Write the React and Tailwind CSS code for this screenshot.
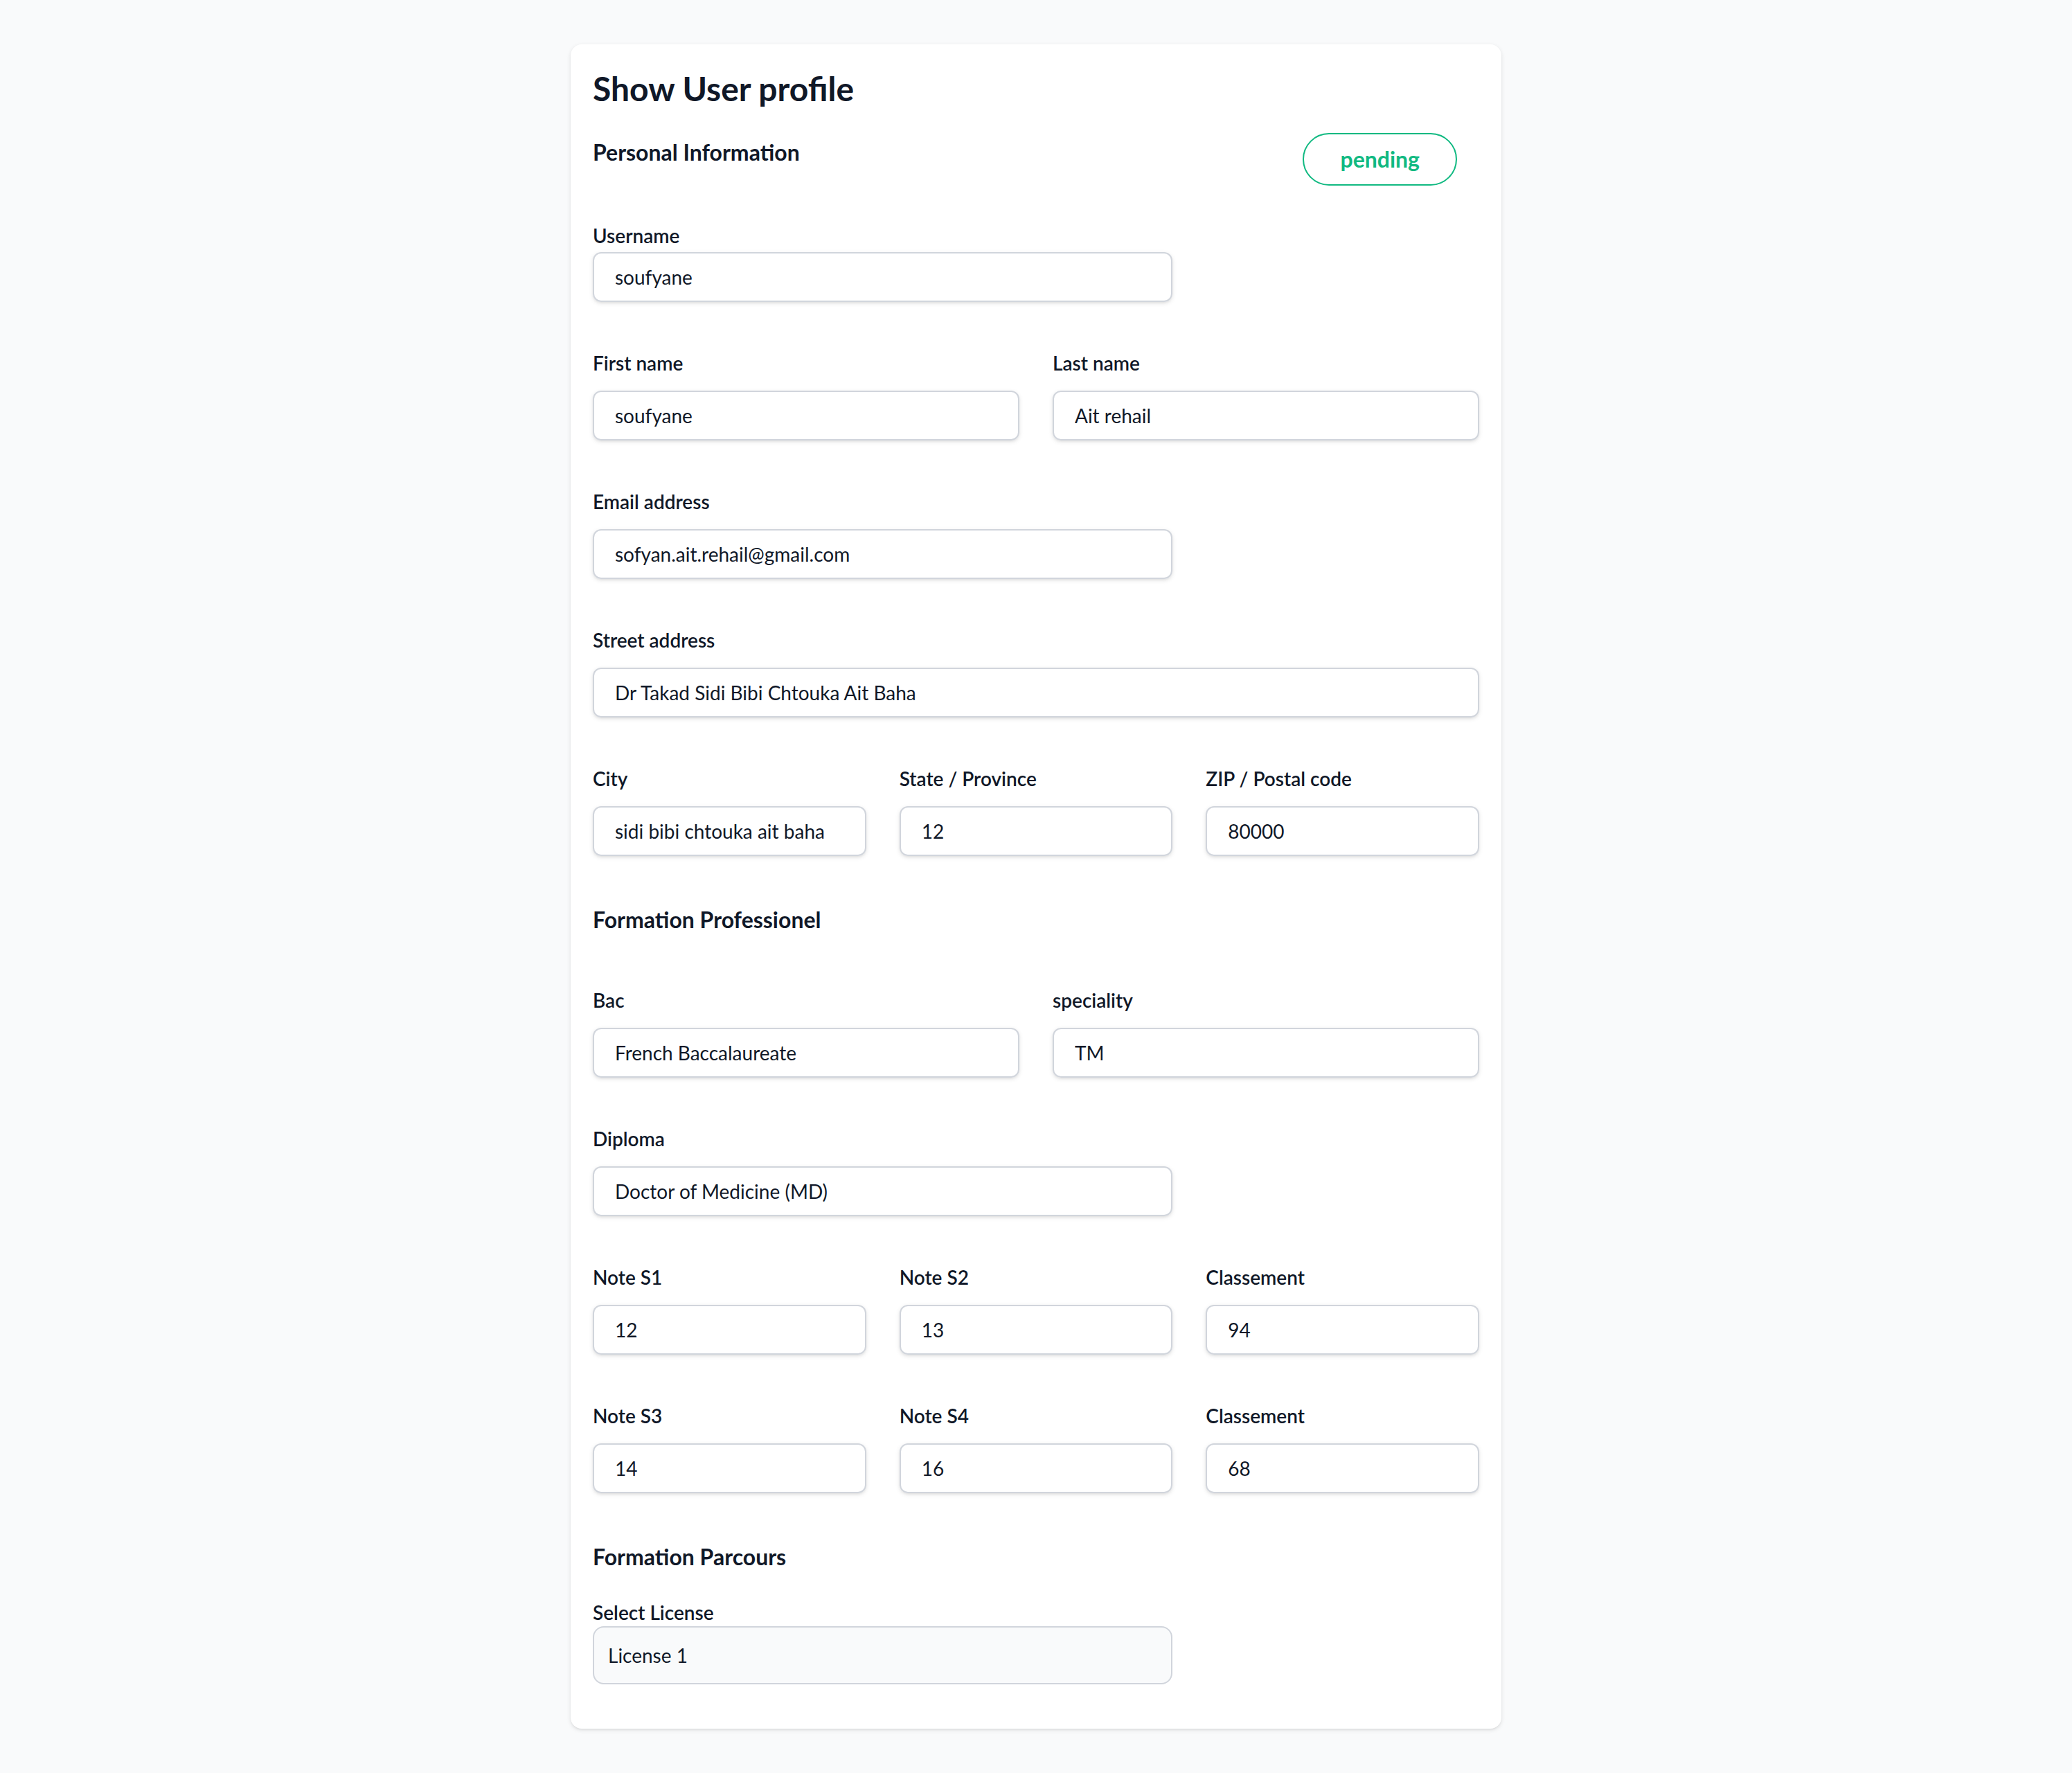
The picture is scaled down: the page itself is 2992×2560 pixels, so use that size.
import { useState } from "react";

function Field({ label, value, span, tight }) {
  return (
    <div className={span}>
      <label className="block text-sm font-semibold leading-6 text-gray-900">{label}</label>
      <div className={tight ? "" : "mt-2"}>
        <input
          type="text"
          readOnly
          value={value}
          className="block w-full rounded-md border-0 px-4 py-1.5 text-sm leading-6 text-gray-900 shadow-sm ring-1 ring-inset ring-gray-300 outline-none"
        />
      </div>
    </div>
  );
}

function UserProfile() {
  const [license, setLicense] = useState("License 1");

  return (
    <div className="mx-auto max-w-2xl rounded-lg bg-white px-4 pt-4 pb-8 shadow">
      <h1 className="text-2xl font-bold leading-8 text-gray-900">Show User profile</h1>

      <div className="mt-4 flex items-start justify-between">
        <h2 className="text-base font-bold leading-7 text-gray-900">Personal Information</h2>
        <span className="mr-4 rounded-full border border-[#10b981] px-[26px] py-1.5 text-base font-bold leading-6 text-[#10b981]">
          pending
        </span>
      </div>

      <div className="mt-6 grid grid-cols-6 gap-x-6 gap-y-8">
        <Field label="Username" value="soufyane" span="col-span-4" tight />
        <div className="col-span-2" />
        <Field label="First name" value="soufyane" span="col-span-3" />
        <Field label="Last name" value="Ait rehail" span="col-span-3" />
        <Field label="Email address" value="sofyan.ait.rehail@gmail.com" span="col-span-4" />
        <div className="col-span-2" />
        <Field label="Street address" value="Dr Takad Sidi Bibi Chtouka Ait Baha" span="col-span-6" />
        <Field label="City" value="sidi bibi chtouka ait baha" span="col-span-2" />
        <Field label="State / Province" value="12" span="col-span-2" />
        <Field label="ZIP / Postal code" value="80000" span="col-span-2" />
      </div>

      <h2 className="mt-8 text-base font-bold leading-7 text-gray-900">Formation Professionel</h2>

      <div className="mt-8 grid grid-cols-6 gap-x-6 gap-y-8">
        <Field label="Bac" value="French Baccalaureate" span="col-span-3" />
        <Field label="speciality" value="TM" span="col-span-3" />
        <Field label="Diploma" value="Doctor of Medicine (MD)" span="col-span-4" />
        <div className="col-span-2" />
        <Field label="Note S1" value="12" span="col-span-2" />
        <Field label="Note S2" value="13" span="col-span-2" />
        <Field label="Classement" value="94" span="col-span-2" />
        <Field label="Note S3" value="14" span="col-span-2" />
        <Field label="Note S4" value="16" span="col-span-2" />
        <Field label="Classement" value="68" span="col-span-2" />
      </div>

      <h2 className="mt-8 text-base font-bold leading-7 text-gray-900">Formation Parcours</h2>

      <div className="mt-4 grid grid-cols-6 gap-x-6">
        <div className="col-span-4">
          <label className="block text-sm font-semibold leading-5 text-gray-900">Select License</label>
          <select
            value={license}
            onChange={(e) => setLicense(e.target.value)}
            className="block w-full appearance-none rounded-lg border border-gray-300 bg-gray-50 p-2.5 text-sm leading-5 text-gray-900 outline-none"
          >
            <option>License 1</option>
            <option>License 2</option>
            <option>License 3</option>
          </select>
        </div>
      </div>
    </div>
  );
}

export default function App() {
  return (
    <div className="min-h-screen bg-gray-50 font-['Lato','Noto_Sans',sans-serif]">
      <div className="py-8 [zoom:2]">
        <UserProfile />
      </div>
    </div>
  );
}
